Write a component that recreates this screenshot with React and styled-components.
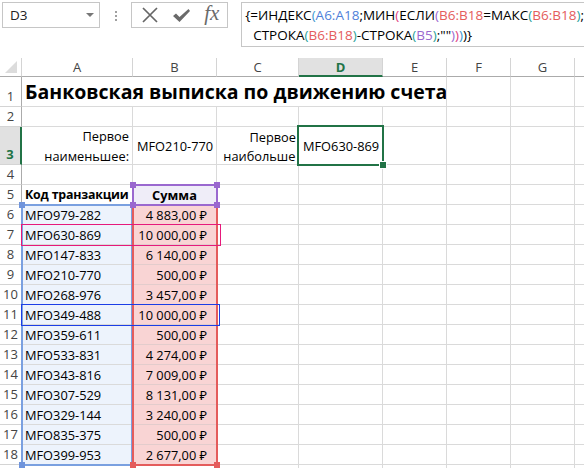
import React from 'react';
import styled, { createGlobalStyle } from 'styled-components';

const GlobalStyle = createGlobalStyle`
  html, body {
    margin: 0;
    padding: 0;
    background: #fff;
  }
  body {
    font-family: "Open Sans", "Noto Sans", "DejaVu Sans", sans-serif;
  }
`;

const COLS = [111, 84, 82, 84, 64, 64, 64, 64];
const LETTERS = ['A', 'B', 'C', 'D', 'E', 'F', 'G', 'H'];
const TEMPLATE_COLS = `22px ${COLS.map(w => w + 'px').join(' ')}`;
const TEMPLATE_ROWS = '19px 30px 20px 38px repeat(16, 20px)';

const transactions = [
  ['MFO979-282', '4 883,00 ₽'],
  ['MFO630-869', '10 000,00 ₽'],
  ['MFO147-833', '6 140,00 ₽'],
  ['MFO210-770', '500,00 ₽'],
  ['MFO268-976', '3 457,00 ₽'],
  ['MFO349-488', '10 000,00 ₽'],
  ['MFO359-611', '500,00 ₽'],
  ['MFO533-831', '4 274,00 ₽'],
  ['MFO343-816', '7 009,00 ₽'],
  ['MFO307-529', '8 131,00 ₽'],
  ['MFO329-144', '3 240,00 ₽'],
  ['MFO835-375', '500,00 ₽'],
  ['MFO399-953', '2 677,00 ₽'],
];

const C = {
  blue: '#4f7fd9',
  red: '#e45c5c',
  purple: '#9a68cf',
  teal: '#2a9f9a',
  pink: '#e0407f',
  sky: '#3a96d0',
};

const Page = styled.div`
  width: 584px;
  height: 468px;
  overflow: hidden;
  color: #000;
`;

const Toolbar = styled.div`
  height: 58px;
  display: flex;
  align-items: flex-start;
  padding: 2px 0 0 2px;
  box-sizing: border-box;
`;

const NameBox = styled.div`
  width: 100px;
  height: 26px;
  box-sizing: border-box;
  border: 1px solid #c6c6c6;
  display: flex;
  align-items: center;
  justify-content: space-between;
  padding: 0 5px 0 7px;
  font-size: 13.5px;
  color: #222;
`;

const DropArrow = styled.span`
  width: 0;
  height: 0;
  border-left: 4px solid transparent;
  border-right: 4px solid transparent;
  border-top: 4px solid #777;
`;

const Grip = styled.div`
  margin: 9px 14px 0 15px;
  display: flex;
  flex-direction: column;
  gap: 2px;

  span {
    width: 2px;
    height: 2px;
    background: #a0a0a0;
  }
`;

const IconBox = styled.div`
  width: 100px;
  height: 26px;
  box-sizing: border-box;
  border: 1px solid #c6c6c6;
  display: flex;
  align-items: center;
  justify-content: space-between;
  padding: 0 1px 0 9px;
`;

const Fx = styled.span`
  font-family: "Liberation Serif", "DejaVu Serif", serif;
  font-style: italic;
  font-size: 21px;
  color: #6a6a6a;
  width: 22px;
  line-height: 1;
  margin-top: -3px;
`;

const FormulaBox = styled.div`
  margin-left: 13px;
  flex: 1;
  height: 45px;
  box-sizing: border-box;
  border: 1px solid #c6c6c6;
  border-right: none;
  padding: 2px 0 0 3px;
  font-size: 13.5px;
  line-height: 20px;
  white-space: pre;
  color: #000;
`;

const FormulaLine = styled.div`
  padding-left: ${p => p.$indent || 0}px;
`;

const Tok = styled.span`
  color: ${p => p.$c || '#000'};
`;

const SheetWrap = styled.div`
  position: relative;
`;

const Sheet = styled.div`
  display: grid;
  grid-template-columns: ${TEMPLATE_COLS};
  grid-template-rows: ${TEMPLATE_ROWS};
`;

const Overlay = styled(Sheet)`
  position: absolute;
  inset: 0;
  pointer-events: none;
`;

const Corner = styled.div`
  position: relative;
  box-sizing: border-box;
  border-right: 1px solid #d4d4d4;
  border-bottom: 1px solid #ababab;

  &::after {
    content: '';
    position: absolute;
    right: 4px;
    bottom: 3px;
    width: 0;
    height: 0;
    border-left: 12px solid transparent;
    border-bottom: 12px solid #dcdcdc;
  }
`;

const ColHead = styled.div`
  box-sizing: border-box;
  display: flex;
  align-items: center;
  justify-content: center;
  font-size: 13px;
  color: ${p => (p.$active ? '#217346' : '#444')};
  font-weight: ${p => (p.$active ? 700 : 400)};
  background: ${p => (p.$active ? '#e1e1e1' : '#fff')};
  border-right: 1px solid #d4d4d4;
  border-bottom: ${p => (p.$active ? '2px solid #217346' : '1px solid #ababab')};
`;

const RowHead = styled.div`
  grid-column: 1;
  box-sizing: border-box;
  display: flex;
  align-items: flex-end;
  justify-content: center;
  padding-bottom: 1px;
  font-size: 13px;
  color: ${p => (p.$active ? '#217346' : '#444')};
  font-weight: ${p => (p.$active ? 700 : 400)};
  background: ${p => (p.$active ? '#e1e1e1' : '#fff')};
  border-right: ${p => (p.$active ? '2px solid #217346' : '1px solid #ababab')};
  border-bottom: 1px solid #d4d4d4;
`;

const Cell = styled.div`
  box-sizing: border-box;
  display: flex;
  flex-direction: column;
  justify-content: center;
  align-items: ${p => p.$align || 'flex-start'};
  padding: 0 ${p => p.$padR ?? 3}px 0 ${p => p.$padL ?? 3}px;
  font-size: ${p => p.$size || 12.8}px;
  font-weight: ${p => (p.$bold ? 700 : 400)};
  letter-spacing: ${p => p.$ls || 0}px;
  line-height: ${p => p.$lh || 18}px;
  white-space: nowrap;
  overflow: hidden;
  background: ${p => p.$fill || 'transparent'};
  border-right: 1px solid ${p => p.$line || '#dadada'};
  border-bottom: 1px solid ${p => p.$line || '#dadada'};
  ${p => p.$span && `grid-column: span ${p.$span};`}
`;

const ClipLine = styled.span`
  align-self: stretch;
  text-align: ${p => p.$align || 'right'};
  overflow: hidden;
`;

const RangeBox = styled.div`
  grid-column: ${p => p.$col} / span ${p => p.$cols || 1};
  grid-row: ${p => p.$row} / span ${p => p.$rows || 1};
  position: relative;
  z-index: ${p => p.$z || 2};
  margin: ${p => p.$m || '-1px'};
  border: ${p => p.$w || 2}px solid ${p => p.$c};
`;

const Handle = styled.span`
  position: absolute;
  width: 6px;
  height: 6px;
  background: ${p => p.$c};
  ${p => (p.$v === 'top' ? 'top: -4px;' : 'bottom: -4px;')}
  ${p => (p.$h === 'left' ? 'left: -4px;' : 'right: -4px;')}
  ${p => p.$ring && 'outline: 1px solid #fff;'}
`;

function XIcon() {
  return (
    <svg width="18" height="16" viewBox="0 0 18 16">
      <path d="M2 1 L16 15 M16 1 L2 15" stroke="#666" strokeWidth="1.7" fill="none" />
    </svg>
  );
}

function CheckIcon() {
  return (
    <svg width="19" height="15" viewBox="0 0 19 15">
      <path d="M1 8 L4 5.5 L7.5 9 L16.5 1 L18 3 L7.5 14 Z" fill="#6a6a6a" />
    </svg>
  );
}

function Formula() {
  return (
    <FormulaBox>
      <FormulaLine>
        <Tok>{'{=ИНДЕКС'}</Tok>
        <Tok $c={C.sky}>(</Tok>
        <Tok $c={C.blue}>A6:A18</Tok>
        <Tok>;МИН</Tok>
        <Tok $c={C.pink}>(</Tok>
        <Tok>ЕСЛИ</Tok>
        <Tok $c={C.purple}>(</Tok>
        <Tok $c={C.red}>B6:B18</Tok>
        <Tok>=МАКС</Tok>
        <Tok $c={C.teal}>(</Tok>
        <Tok $c={C.red}>B6:B18</Tok>
        <Tok $c={C.teal}>)</Tok>
        <Tok>;</Tok>
      </FormulaLine>
      <FormulaLine $indent={8}>
        <Tok>СТРОКА</Tok>
        <Tok $c={C.teal}>(</Tok>
        <Tok $c={C.red}>B6:B18</Tok>
        <Tok $c={C.teal}>)</Tok>
        <Tok>-СТРОКА</Tok>
        <Tok $c={C.teal}>(</Tok>
        <Tok $c={C.purple}>B5</Tok>
        <Tok $c={C.teal}>)</Tok>
        <Tok>;""</Tok>
        <Tok $c={C.purple}>)</Tok>
        <Tok $c={C.pink}>)</Tok>
        <Tok $c={C.sky}>)</Tok>
        <Tok>{')}'}</Tok>
      </FormulaLine>
    </FormulaBox>
  );
}

function EmptyCells({ from }) {
  return LETTERS.slice(from).map(l => <Cell key={l} />);
}

function App() {
  return (
    <Page>
      <GlobalStyle />
      <Toolbar>
        <NameBox>
          D3
          <DropArrow />
        </NameBox>
        <Grip>
          <span />
          <span />
          <span />
        </Grip>
        <IconBox>
          <XIcon />
          <CheckIcon />
          <Fx>fx</Fx>
        </IconBox>
        <Formula />
      </Toolbar>

      <SheetWrap>
        <Sheet>
          <Corner />
          {LETTERS.map(l => (
            <ColHead key={l} $active={l === 'D'}>{l}</ColHead>
          ))}

          <RowHead>1</RowHead>
          <Cell $span={5} $size={19.5} $bold $lh={26}>
            Банковская выписка по движению счета
          </Cell>
          <EmptyCells from={5} />

          <RowHead>2</RowHead>
          <EmptyCells from={0} />

          <RowHead $active>3</RowHead>
          <Cell $align="flex-end" $lh={20}>
            <span>Первое</span>
            <span>наименьшее:</span>
          </Cell>
          <Cell $padL={4}>MFO210-770</Cell>
          <Cell $lh={20} $padR={2}>
            <ClipLine>Первое</ClipLine>
            <ClipLine $align="left">
              {'\u00a0'}
              наибольшее:
            </ClipLine>
          </Cell>
          <Cell $padL={4}>MFO630-869</Cell>
          <EmptyCells from={4} />

          <RowHead>4</RowHead>
          <EmptyCells from={0} />

          <RowHead>5</RowHead>
          <Cell $bold $size={12.4} $ls={-0.2}>Код транзакции</Cell>
          <Cell $bold $align="center" $fill="#efedf8">Сумма</Cell>
          <EmptyCells from={2} />

          {transactions.map(([code, sum], i) => (
            <React.Fragment key={code + i}>
              <RowHead>{i + 6}</RowHead>
              <Cell $fill="#edf3fc">{code}</Cell>
              <Cell $fill="#f9d4d4" $align="flex-end" $padR={9} $line="#e3cccc">
                {sum}
              </Cell>
              <EmptyCells from={2} />
            </React.Fragment>
          ))}

          <RowHead>19</RowHead>
          <EmptyCells from={0} />
        </Sheet>

        {/* highlighted ranges drawn over the grid */}
        <Overlay>
          <RangeBox $col={2} $row={7} $rows={13} $c="#7aa0e0" $w={2} $m="-1px 0 -1px -1px">
            <Handle $c="#6f94dc" $v="top" $h="left" />
            <Handle $c="#6f94dc" $v="bottom" $h="left" />
          </RangeBox>
          <RangeBox $col={3} $row={7} $rows={13} $c={C.red} $w={2} $z={3}>
            <Handle $c={C.red} $v="bottom" $h="left" />
            <Handle $c={C.red} $v="bottom" $h="right" />
          </RangeBox>
          <RangeBox $col={3} $row={6} $c={C.purple} $w={2} $z={4}>
            <Handle $c={C.purple} $v="top" $h="left" />
            <Handle $c={C.purple} $v="top" $h="right" />
            <Handle $c={C.purple} $v="bottom" $h="left" />
            <Handle $c={C.purple} $v="bottom" $h="right" />
          </RangeBox>
          <RangeBox $col={2} $cols={2} $row={8} $c="#e6197b" $w={1} $z={5} $m="-1px -4px -1px -1px" />
          <RangeBox $col={2} $cols={2} $row={12} $c="#1c3ee6" $w={1} $z={5} $m="-1px -3px -1px -1px" />
          <RangeBox $col={5} $row={4} $c="#217346" $w={2} $z={6} $m="-2px -1px -1px -2px">
            <Handle $c="#217346" $v="bottom" $h="right" $ring />
          </RangeBox>
        </Overlay>
      </SheetWrap>
    </Page>
  );
}

export default App;
